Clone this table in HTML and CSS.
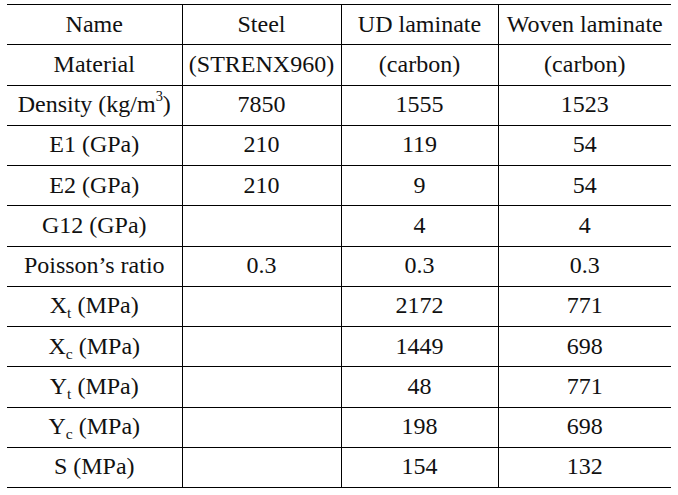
FILE: index.html
```html
<!DOCTYPE html>
<html>
<head>
<meta charset="utf-8">
<link rel="stylesheet" href="styles.css">
</head>
<body>
<table class="props">
  <colgroup>
    <col class="c1"><col class="c2"><col class="c3"><col class="c4">
  </colgroup>
  <tbody>
    <tr><td>Name</td><td>Steel</td><td>UD laminate</td><td>Woven laminate</td></tr>
    <tr><td>Material</td><td>(STRENX960)</td><td>(carbon)</td><td>(carbon)</td></tr>
    <tr><td>Density (kg/m<sup>3</sup>)</td><td>7850</td><td>1555</td><td>1523</td></tr>
    <tr><td>E1 (GPa)</td><td>210</td><td>119</td><td>54</td></tr>
    <tr><td>E2 (GPa)</td><td>210</td><td>9</td><td>54</td></tr>
    <tr><td>G12 (GPa)</td><td></td><td>4</td><td>4</td></tr>
    <tr><td>Poisson’s ratio</td><td>0.3</td><td>0.3</td><td>0.3</td></tr>
    <tr><td>X<sub>t</sub> (MPa)</td><td></td><td>2172</td><td>771</td></tr>
    <tr><td>X<sub>c</sub> (MPa)</td><td></td><td>1449</td><td>698</td></tr>
    <tr><td>Y<sub>t</sub> (MPa)</td><td></td><td>48</td><td>771</td></tr>
    <tr><td>Y<sub>c</sub> (MPa)</td><td></td><td>198</td><td>698</td></tr>
    <tr><td>S (MPa)</td><td></td><td>154</td><td>132</td></tr>
  </tbody>
</table>
</body>
</html>
```
FILE: styles.css
```css
html, body {
  margin: 0;
  padding: 0;
  background: #ffffff;
}
body {
  padding: 4px 0 0 7px;
  font-family: "Liberation Serif", "DejaVu Serif", "Times New Roman", serif;
  color: #111111;
}
.props {
  border-collapse: collapse;
  table-layout: fixed;
  width: 664px;
  font-family: "Liberation Serif", "DejaVu Serif", serif;
  font-size: 24px;
}
.c1 { width: 175px; }
.c2 { width: 159px; }
.c3 { width: 157px; }
.c4 { width: 173px; }
.props td {
  height: 37.25px;
  padding: 0 0 2px 0;
  text-align: center;
  vertical-align: middle;
  border-top: 1px solid #000;
  border-bottom: 1px solid #000;
  white-space: nowrap;
  line-height: 1;
}
.props td + td {
  border-left: 1px solid #000;
}
.props sup {
  font-size: 0.6em;
  vertical-align: 0.75em;
  line-height: 0;
}
.props sub {
  font-size: 0.65em;
  vertical-align: -0.35em;
  line-height: 0;
}
```
